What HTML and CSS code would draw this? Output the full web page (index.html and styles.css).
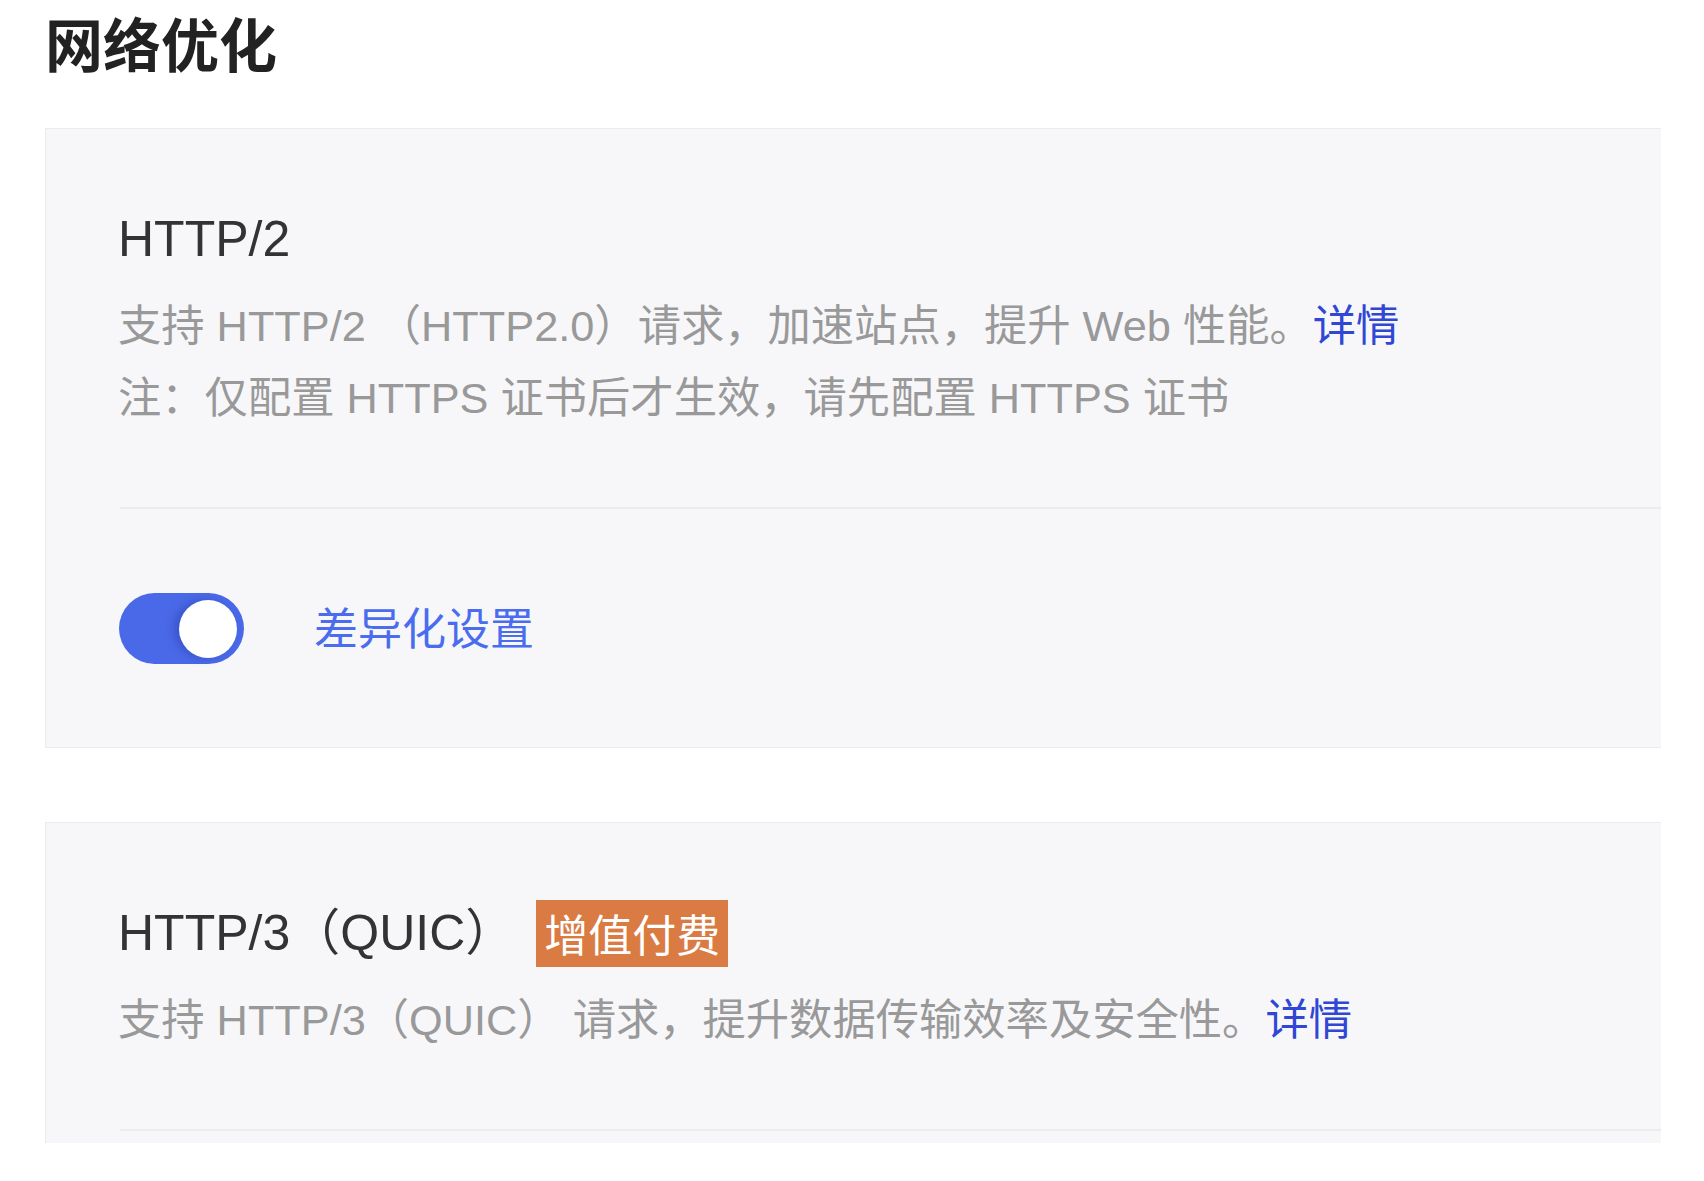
FILE: index.html
```html
<!DOCTYPE html>
<html lang="zh-CN">
<head>
	<meta charset="UTF-8">
	<title>网络优化</title>
	<link rel="stylesheet" href="styles.css">
</head>
<body>
	<div class="page">
		<h1 class="page-title">网络优化</h1>

		<div class="card">
			<div class="card-main">
				<div class="card-head">
					<h2>HTTP/2</h2>
				</div>
				<p class="desc">支持 HTTP/2 （HTTP2.0）请求，加速站点，提升 Web 性能。<a class="more" href="#">详情</a></p>
				<p class="desc">注：仅配置 HTTPS 证书后才生效，请先配置 HTTPS 证书</p>
			</div>
			<div class="card-foot">
				<span class="switch on"><i class="knob"></i></span>
				<a class="setting" href="#">差异化设置</a>
			</div>
		</div>

		<div class="card">
			<div class="card-main">
				<div class="card-head">
					<h2>HTTP/3（QUIC）</h2>
					<span class="tag">增值付费</span>
				</div>
				<p class="desc">支持 HTTP/3（QUIC） 请求，提升数据传输效率及安全性。<a class="more" href="#">详情</a></p>
			</div>
			<div class="card-foot"></div>
		</div>
	</div>
</body>
</html>
```

FILE: styles.css
```css
*{ margin:0; padding:0; box-sizing:border-box; }
a{ text-decoration:none; }

body{ background:#fff; font-family:"Liberation Sans", "Noto Sans CJK SC", sans-serif; }

/* 截图本身右侧、底部是裁掉的 */
.page{ width:1661px; height:1143px; overflow:hidden; padding-left:45px; }

.page-title{ font-size:58px; line-height:84px; font-weight:700; color:#222; margin-bottom:44px; font-family:"Noto Sans CJK SC", sans-serif; }

.card{ width:1700px; background:#f7f7fa; border:1px solid #eaeaef; border-right:none; margin-bottom:74px; }
.card-main{ padding:80px 0 73px 72px; }

.card-head{ display:flex; align-items:center; height:60px; }
.card-head h2{ font-size:50px; line-height:60px; font-weight:400; color:#333; }
.card-head .tag{ margin-left:21px; height:67px; line-height:67px; padding:0 8px; background:#d97b42; color:#fff; font-size:44px; font-family:"Noto Sans CJK SC", sans-serif; }

.desc{ font-size:43.3px; line-height:72px; color:#999; }
.card-head + .desc{ margin-top:21px; }
.desc .more{ color:#2f47d4; }

.card-foot{ margin-left:74px; border-top:2px solid #ebebf0; display:flex; align-items:center; }
.card-foot:not(:empty){ padding:84px 0 83px; }
.card-foot:empty{ height:120px; }

.switch{ width:125px; height:71px; border-radius:36px; background:#4a69e8; display:flex; align-items:center; justify-content:flex-end; padding:0 7px; margin-left:-1px; }
.switch .knob{ width:58px; height:58px; border-radius:50%; background:#fff; box-shadow:-5px 0 8px rgba(30,45,150,.35); }
.setting{ margin-left:70px; font-size:44px; line-height:60px; color:#4a6cef; font-family:"Noto Sans CJK SC", sans-serif; margin-top:-6px; }
```
